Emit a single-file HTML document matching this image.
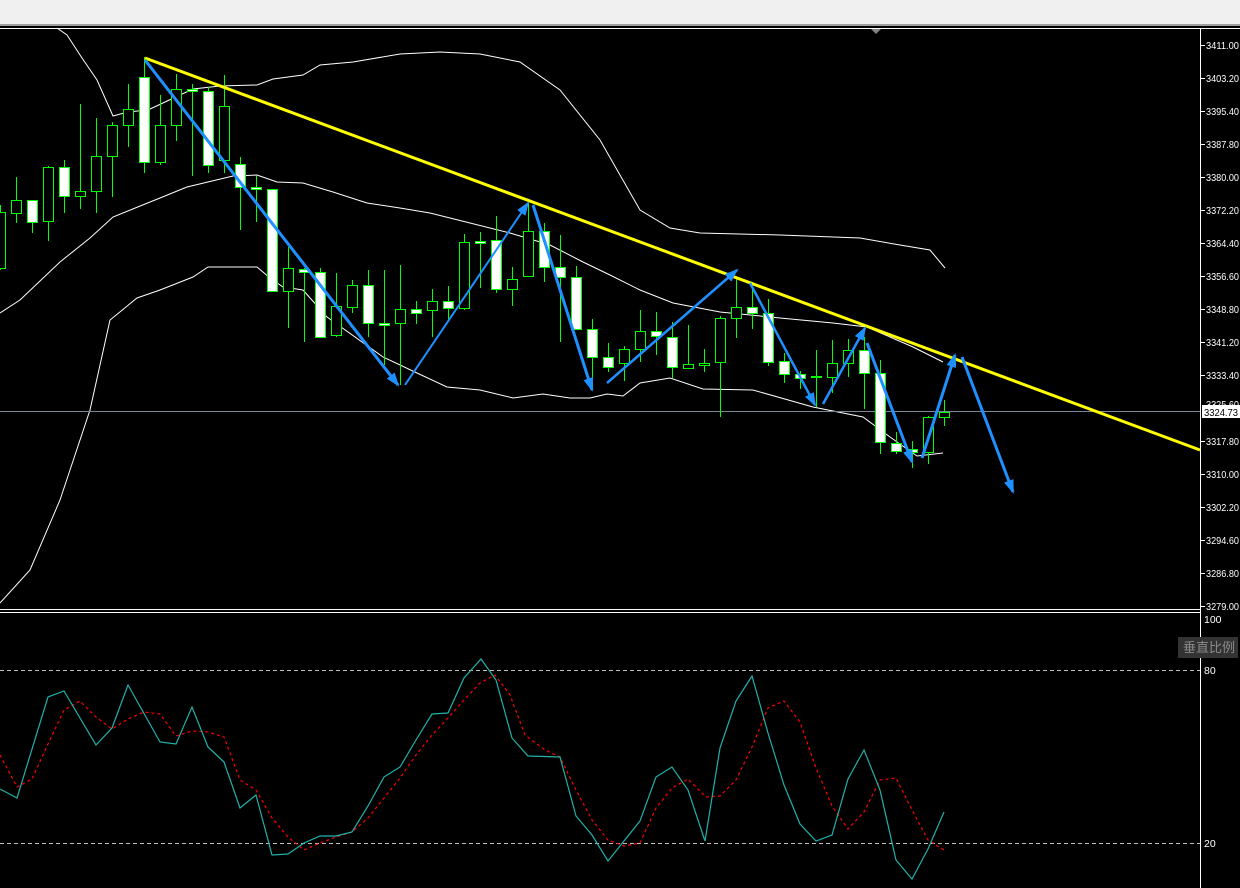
<!DOCTYPE html>
<html><head><meta charset="utf-8"><style>
html,body{margin:0;padding:0;background:#000;width:1240px;height:888px;overflow:hidden}
svg{display:block}
text{font-family:"Liberation Sans","Noto Sans CJK SC",sans-serif;font-size:10.5px;fill:#fff}
</style></head><body>
<svg width="1240" height="888" viewBox="0 0 1240 888" xmlns="http://www.w3.org/2000/svg">
<defs>
<marker id="ah" markerWidth="14" markerHeight="10" refX="12" refY="5" orient="auto" markerUnits="userSpaceOnUse"><path d="M0,0 L14,5 L0,10 Z" fill="#1e90ff"/></marker>
</defs>
<rect x="0" y="0" width="1240" height="888" fill="#000"/>
<rect x="0" y="0" width="1240" height="24" fill="#f0f0f0"/>
<rect x="0" y="24" width="1240" height="2" fill="#a0a0a0"/>
<rect x="0" y="28" width="1240" height="1" fill="#fff"/>
<path d="M871,29 L881,29 L876,34 Z" fill="#808080"/>
<rect x="1200" y="28" width="1" height="860" fill="#fff"/>
<rect x="0" y="609" width="1201" height="1" fill="#fff"/>
<rect x="0" y="612" width="1201" height="1" fill="#fff"/>

<g fill="none" stroke="#fff" stroke-width="1">
<polyline points="57,28 67,35 82,58 97,80 113,116 128,112 148,110 180,95 193,89 220,86 257,85 273,79 303,75 320,65 353,62 400,54 440,52 480,54 520,62 560,90 600,140 640,210 670,228 700,233 780,235 860,238 900,245 930,250 945,268"/>
<polyline points="0,313 20,300 60,262 90,238 113,217 160,198 187,187 233,176 257,175 277,182 303,183 333,192 367,203 400,208 430,213 470,223 510,233 550,245 583,262 610,275 640,290 673,303 720,312 780,318 833,323 867,327 913,347 943,362"/>
<polyline points="0,603 30,570 60,500 90,410 110,320 137,298 160,290 193,277 208,267 257,267 270,278 283,287 303,290 327,317 383,357 417,373 447,387 480,390 513,398 543,394 570,398 590,398 607,394 623,396 640,383 670,378 703,389 753,390 813,407 863,417 890,437 917,456 943,453"/>
</g>

<rect x="0" y="411" width="1200" height="1" fill="#778899"/>

<g stroke="#00ff00" stroke-width="1" shape-rendering="crispEdges">
<g fill="none">
<line x1="0.5" y1="205" x2="0.5" y2="270"/><line x1="16.5" y1="177" x2="16.5" y2="223"/><line x1="32.5" y1="200" x2="32.5" y2="233"/><line x1="48.5" y1="166" x2="48.5" y2="241"/><line x1="64.5" y1="160" x2="64.5" y2="213"/><line x1="80.5" y1="104" x2="80.5" y2="209"/><line x1="96.5" y1="118" x2="96.5" y2="213"/><line x1="112.5" y1="122" x2="112.5" y2="197"/><line x1="128.5" y1="84" x2="128.5" y2="147"/><line x1="144.5" y1="57" x2="144.5" y2="173"/><line x1="160.5" y1="95" x2="160.5" y2="165"/><line x1="176.5" y1="74" x2="176.5" y2="141"/><line x1="192.5" y1="84" x2="192.5" y2="176"/><line x1="208.5" y1="87" x2="208.5" y2="173"/><line x1="224.5" y1="75" x2="224.5" y2="173"/><line x1="240.5" y1="157" x2="240.5" y2="230"/><line x1="256.5" y1="176" x2="256.5" y2="222"/><line x1="272.5" y1="189" x2="272.5" y2="292"/><line x1="288.5" y1="247" x2="288.5" y2="328"/><line x1="304.5" y1="268" x2="304.5" y2="342"/><line x1="320.5" y1="268" x2="320.5" y2="338"/><line x1="336.5" y1="273" x2="336.5" y2="337"/><line x1="352.5" y1="280" x2="352.5" y2="313"/><line x1="368.5" y1="270" x2="368.5" y2="337"/><line x1="384.5" y1="270" x2="384.5" y2="365"/><line x1="400.5" y1="265" x2="400.5" y2="385"/><line x1="416.5" y1="301" x2="416.5" y2="324"/><line x1="432.5" y1="289" x2="432.5" y2="337"/><line x1="448.5" y1="286" x2="448.5" y2="320"/><line x1="464.5" y1="234" x2="464.5" y2="310"/><line x1="480.5" y1="232" x2="480.5" y2="288"/><line x1="496.5" y1="216" x2="496.5" y2="293"/><line x1="512.5" y1="267" x2="512.5" y2="306"/><line x1="528.5" y1="200" x2="528.5" y2="277"/><line x1="544.5" y1="223" x2="544.5" y2="282"/><line x1="560.5" y1="235" x2="560.5" y2="342"/><line x1="576.5" y1="266" x2="576.5" y2="330"/><line x1="592.5" y1="319" x2="592.5" y2="390"/><line x1="608.5" y1="343" x2="608.5" y2="372"/><line x1="624.5" y1="346" x2="624.5" y2="381"/><line x1="640.5" y1="310" x2="640.5" y2="362"/><line x1="656.5" y1="312" x2="656.5" y2="355"/><line x1="672.5" y1="322" x2="672.5" y2="378"/><line x1="688.5" y1="325" x2="688.5" y2="368"/><line x1="704.5" y1="349" x2="704.5" y2="372"/><line x1="720.5" y1="316" x2="720.5" y2="417"/><line x1="736.5" y1="277" x2="736.5" y2="338"/><line x1="752.5" y1="282" x2="752.5" y2="329"/><line x1="768.5" y1="299" x2="768.5" y2="366"/><line x1="784.5" y1="353" x2="784.5" y2="383"/><line x1="800.5" y1="371" x2="800.5" y2="389"/><line x1="816.5" y1="350" x2="816.5" y2="407"/><line x1="832.5" y1="340" x2="832.5" y2="393"/><line x1="848.5" y1="339" x2="848.5" y2="377"/><line x1="864.5" y1="337" x2="864.5" y2="409"/><line x1="880.5" y1="360" x2="880.5" y2="454"/><line x1="896.5" y1="432" x2="896.5" y2="454"/><line x1="912.5" y1="441" x2="912.5" y2="468"/><line x1="928.5" y1="416" x2="928.5" y2="464"/><line x1="944.5" y1="400" x2="944.5" y2="426"/>
</g>
<g fill="#000">
<rect x="-4.5" y="212.5" width="10" height="56"/><rect x="11.5" y="200.5" width="10" height="13"/><rect x="43.5" y="167.5" width="10" height="54"/><rect x="75.5" y="191.5" width="10" height="5"/><rect x="91.5" y="156.5" width="10" height="35"/><rect x="107.5" y="125.5" width="10" height="31"/><rect x="123.5" y="109.5" width="10" height="16"/><rect x="155.5" y="125.5" width="10" height="37"/><rect x="171.5" y="89.5" width="10" height="36"/><rect x="219.5" y="106.5" width="10" height="54"/><rect x="283.5" y="268.5" width="10" height="23"/><rect x="331.5" y="306.5" width="10" height="29"/><rect x="347.5" y="285.5" width="10" height="22"/><rect x="395.5" y="309.5" width="10" height="14"/><rect x="427.5" y="301.5" width="10" height="9"/><rect x="459.5" y="242.5" width="10" height="66"/><rect x="507.5" y="279.5" width="10" height="10"/><rect x="523.5" y="231.5" width="10" height="45"/><rect x="619.5" y="349.5" width="10" height="14"/><rect x="635.5" y="331.5" width="10" height="18"/><rect x="683.5" y="364.5" width="10" height="4"/><rect x="699.5" y="363.5" width="10" height="2"/><rect x="715.5" y="318.5" width="10" height="44"/><rect x="731.5" y="307.5" width="10" height="11"/><rect x="827.5" y="363.5" width="10" height="14"/><rect x="843.5" y="350.5" width="10" height="13"/><rect x="923.5" y="417.5" width="10" height="35"/><rect x="939.5" y="412.5" width="10" height="5"/>
</g>
<g fill="#fff">
<rect x="27.5" y="200.5" width="10" height="22"/><rect x="59.5" y="167.5" width="10" height="29"/><rect x="139.5" y="77.5" width="10" height="85"/><rect x="187.5" y="89.5" width="10" height="2"/><rect x="203.5" y="91.5" width="10" height="74"/><rect x="235.5" y="164.5" width="10" height="23"/><rect x="251.5" y="187.5" width="10" height="2"/><rect x="267.5" y="189.5" width="10" height="102"/><rect x="299.5" y="269.5" width="10" height="3"/><rect x="315.5" y="272.5" width="10" height="65"/><rect x="363.5" y="285.5" width="10" height="38"/><rect x="379.5" y="323.5" width="10" height="2"/><rect x="411.5" y="309.5" width="10" height="4"/><rect x="443.5" y="301.5" width="10" height="7"/><rect x="475.5" y="241.5" width="10" height="2"/><rect x="491.5" y="240.5" width="10" height="49"/><rect x="539.5" y="231.5" width="10" height="36"/><rect x="555.5" y="267.5" width="10" height="10"/><rect x="571.5" y="277.5" width="10" height="52"/><rect x="587.5" y="329.5" width="10" height="28"/><rect x="603.5" y="357.5" width="10" height="10"/><rect x="651.5" y="331.5" width="10" height="5"/><rect x="667.5" y="337.5" width="10" height="30"/><rect x="747.5" y="307.5" width="10" height="6"/><rect x="763.5" y="313.5" width="10" height="49"/><rect x="779.5" y="361.5" width="10" height="13"/><rect x="795.5" y="374.5" width="10" height="4"/><rect x="811.5" y="376.5" width="10" height="1"/><rect x="859.5" y="350.5" width="10" height="23"/><rect x="875.5" y="373.5" width="10" height="69"/><rect x="891.5" y="443.5" width="10" height="8"/><rect x="907.5" y="449.5" width="10" height="3"/>
</g>
</g>

<line x1="145" y1="58" x2="1200" y2="450" stroke="#ffff00" stroke-width="3"/>

<g stroke="#1e90ff" fill="none" marker-end="url(#ah)">
<line x1="145" y1="60" x2="398" y2="385" stroke-width="3"/>
<line x1="405" y1="385" x2="528" y2="203" stroke-width="2"/>
<line x1="533" y1="205" x2="592" y2="390" stroke-width="3"/>
<line x1="607" y1="383" x2="737" y2="270" stroke-width="2.5"/>
<line x1="750" y1="283" x2="815" y2="405" stroke-width="2.5"/>
<line x1="823" y1="404" x2="865" y2="328" stroke-width="2.5"/>
<line x1="867" y1="343" x2="912" y2="462" stroke-width="3"/>
<line x1="922" y1="458" x2="955" y2="355" stroke-width="3"/>
<line x1="962" y1="357" x2="1013" y2="492" stroke-width="3"/>
</g>

<g fill="#fff">
<rect x="1201" y="45" width="4" height="1"/><rect x="1201" y="78" width="4" height="1"/><rect x="1201" y="111" width="4" height="1"/><rect x="1201" y="144" width="4" height="1"/><rect x="1201" y="177" width="4" height="1"/><rect x="1201" y="210" width="4" height="1"/><rect x="1201" y="243" width="4" height="1"/><rect x="1201" y="276" width="4" height="1"/><rect x="1201" y="309" width="4" height="1"/><rect x="1201" y="342" width="4" height="1"/><rect x="1201" y="375" width="4" height="1"/><rect x="1201" y="441" width="4" height="1"/><rect x="1201" y="474" width="4" height="1"/><rect x="1201" y="507" width="4" height="1"/><rect x="1201" y="540" width="4" height="1"/><rect x="1201" y="573" width="4" height="1"/><rect x="1201" y="606" width="4" height="1"/>
</g>
<g>
<text x="1206" y="49" textLength="33" lengthAdjust="spacingAndGlyphs">3411.00</text><text x="1206" y="82" textLength="33" lengthAdjust="spacingAndGlyphs">3403.20</text><text x="1206" y="115" textLength="33" lengthAdjust="spacingAndGlyphs">3395.40</text><text x="1206" y="148" textLength="33" lengthAdjust="spacingAndGlyphs">3387.80</text><text x="1206" y="181" textLength="33" lengthAdjust="spacingAndGlyphs">3380.00</text><text x="1206" y="214" textLength="33" lengthAdjust="spacingAndGlyphs">3372.20</text><text x="1206" y="247" textLength="33" lengthAdjust="spacingAndGlyphs">3364.40</text><text x="1206" y="280" textLength="33" lengthAdjust="spacingAndGlyphs">3356.60</text><text x="1206" y="313" textLength="33" lengthAdjust="spacingAndGlyphs">3348.80</text><text x="1206" y="346" textLength="33" lengthAdjust="spacingAndGlyphs">3341.20</text><text x="1206" y="379" textLength="33" lengthAdjust="spacingAndGlyphs">3333.40</text><text x="1206" y="408" textLength="33" lengthAdjust="spacingAndGlyphs">3325.60</text><text x="1206" y="445" textLength="33" lengthAdjust="spacingAndGlyphs">3317.80</text><text x="1206" y="478" textLength="33" lengthAdjust="spacingAndGlyphs">3310.00</text><text x="1206" y="511" textLength="33" lengthAdjust="spacingAndGlyphs">3302.20</text><text x="1206" y="544" textLength="33" lengthAdjust="spacingAndGlyphs">3294.60</text><text x="1206" y="577" textLength="33" lengthAdjust="spacingAndGlyphs">3286.80</text><text x="1206" y="610" textLength="33" lengthAdjust="spacingAndGlyphs">3279.00</text>
</g>
<rect x="1202" y="405" width="38" height="13" fill="#fff"/>
<text x="1204" y="416" style="fill:#000" textLength="34" lengthAdjust="spacingAndGlyphs">3324.73</text>

<g stroke="#c0c0c0" stroke-dasharray="4,3" stroke-width="1">
<line x1="0" y1="670.5" x2="1200" y2="670.5"/>
<line x1="0" y1="843.5" x2="1200" y2="843.5"/>
</g>
<text x="1204" y="623">100</text>
<text x="1204" y="674">80</text>
<text x="1204" y="847">20</text>
<rect x="1178" y="637" width="60" height="21" fill="#333"/>
<text x="1183" y="652" style="fill:#8a8a8a;font-size:13px">垂直比例</text>

<polyline fill="none" stroke="#ff0000" stroke-width="1.2" stroke-dasharray="3,3" points="0,755 17,787 32,779 48,744 64,710 80,701 96,717 112,729 128,719 144,712 160,714 176,736 192,731 208,732 224,737 240,780 256,790 272,818 288,837 304,850 320,843 336,837 352,832 368,818 384,798 400,778 416,755 432,735 448,718 464,700 480,683 495,675 510,695 525,735 545,750 560,757 576,790 592,820 608,840 624,846 640,843 656,808 672,788 688,779 706,797 720,796 736,780 752,747 768,708 784,701 800,722 816,768 832,806 848,829 864,812 880,780 896,778 912,810 928,840 944,850"/>
<polyline fill="none" stroke="#20b2aa" stroke-width="1.2" points="0,789 17,798 48,697 64,691 96,745 112,728 128,685 160,742 176,744 192,707 208,747 224,762 240,808 256,795 272,855 288,854 304,843 320,836 336,836 352,832 368,806 384,777 400,767 416,740 432,714 448,713 464,678 481,659 496,680 512,738 528,756 560,757 576,816 592,835 608,861 640,821 656,777 672,767 688,790 705,841 720,748 736,701 752,676 768,733 784,785 800,824 816,841 832,835 848,779 864,750 880,790 896,860 912,879 928,849 944,812"/>
</svg>
</body></html>
